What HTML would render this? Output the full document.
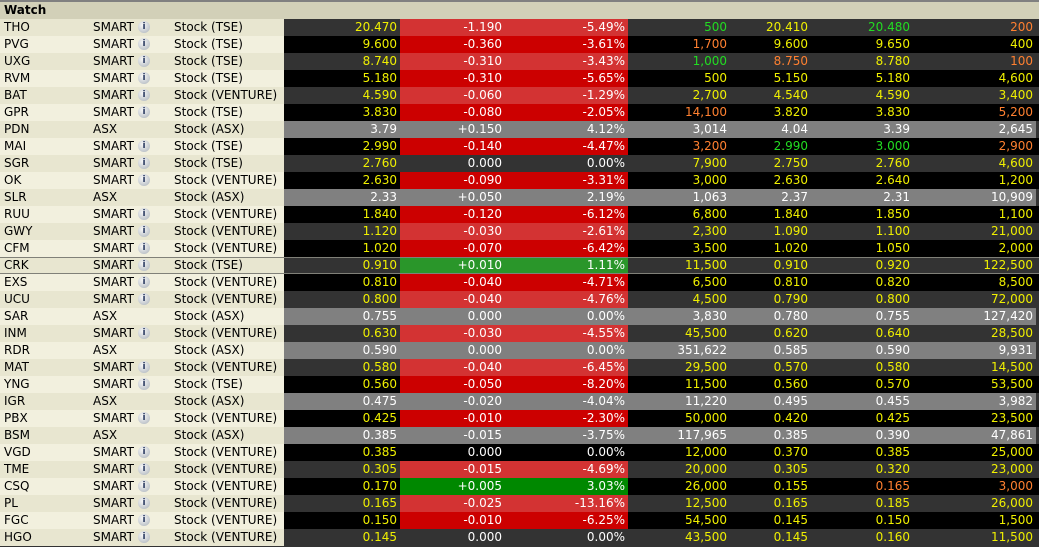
<!DOCTYPE html>
<html><head><meta charset="utf-8"><style>
body{margin:0;width:1039px;height:547px;overflow:hidden;background:#333;font-family:"DejaVu Sans","Liberation Sans",sans-serif;font-size:12px}
.top{height:2px;background:#808080}
.hd{height:17px;background:#d2d0b8;font-weight:bold;line-height:17px;padding-left:4px;color:#000}
table{border-collapse:collapse;table-layout:fixed;width:1039px}
td{height:17px;padding:0;white-space:nowrap;overflow:hidden;line-height:17px}
td.s{padding-left:4px;color:#000}
td.x{padding-left:3px;color:#000}
td.t{color:#000}
td.n{text-align:right;padding-right:3px;color:#f0f000}
td.c{text-align:right;padding-right:10px;color:#fff}
td.p{text-align:right;padding-right:3px;color:#fff}
td.z{padding:0}
tr.e td.s,tr.e td.x,tr.e td.i,tr.e td.t{background:#e8e6d0}
tr.o td.s,tr.o td.x,tr.o td.i,tr.o td.t{background:#f2f0de}
tr.e td.n,tr.e td.c,tr.e td.p,tr.e td.z{background:#333}
tr.o td.n,tr.o td.c,tr.o td.p,tr.o td.z{background:#000}
tr.e td.r{background:#d33333}
tr.o td.r{background:#cc0000}
tr.e td.gg{background:#2a962a}
tr.o td.gg{background:#008800}
tr.a td.n,tr.a td.c,tr.a td.p{background:#808080;color:#fff}
tr.a td.z{background:#333}
.g{color:#22dd22!important}.or{color:#ff8030!important}
td.i{position:relative}
.ic{position:absolute;left:0;top:2px;width:12px;height:12px;border-radius:50%;background:radial-gradient(circle at 40% 35%,#fafafa,#a8b0b8);font-size:9px;font-weight:bold;line-height:12px;text-align:center;color:#2a3a60}
tr.sel td{box-shadow:inset 0 1px #808078,inset 0 -1px #808078}
</style></head><body>
<div class="top"></div>
<div class="hd">Watch</div>
<table>
<colgroup><col style="width:90px"><col style="width:48px"><col style="width:36px"><col style="width:110px"><col style="width:116px"><col style="width:112px"><col style="width:116px"><col style="width:102px"><col style="width:81px"><col style="width:102px"><col style="width:123px"><col style="width:3px"></colgroup>
<tr class="e"><td class="s">THO</td><td class="x">SMART</td><td class="i"><span class="ic">i</span></td><td class="t">Stock (TSE)</td><td class="n">20.470</td><td class="c r">-1.190</td><td class="p r">-5.49%</td><td class="n g">500</td><td class="n">20.410</td><td class="n g">20.480</td><td class="n or">200</td><td class="z"></td></tr>
<tr class="o"><td class="s">PVG</td><td class="x">SMART</td><td class="i"><span class="ic">i</span></td><td class="t">Stock (TSE)</td><td class="n">9.600</td><td class="c r">-0.360</td><td class="p r">-3.61%</td><td class="n or">1,700</td><td class="n">9.600</td><td class="n">9.650</td><td class="n">400</td><td class="z"></td></tr>
<tr class="e"><td class="s">UXG</td><td class="x">SMART</td><td class="i"><span class="ic">i</span></td><td class="t">Stock (TSE)</td><td class="n">8.740</td><td class="c r">-0.310</td><td class="p r">-3.43%</td><td class="n g">1,000</td><td class="n or">8.750</td><td class="n">8.780</td><td class="n or">100</td><td class="z"></td></tr>
<tr class="o"><td class="s">RVM</td><td class="x">SMART</td><td class="i"><span class="ic">i</span></td><td class="t">Stock (TSE)</td><td class="n">5.180</td><td class="c r">-0.310</td><td class="p r">-5.65%</td><td class="n">500</td><td class="n">5.150</td><td class="n">5.180</td><td class="n">4,600</td><td class="z"></td></tr>
<tr class="e"><td class="s">BAT</td><td class="x">SMART</td><td class="i"><span class="ic">i</span></td><td class="t">Stock (VENTURE)</td><td class="n">4.590</td><td class="c r">-0.060</td><td class="p r">-1.29%</td><td class="n">2,700</td><td class="n">4.540</td><td class="n">4.590</td><td class="n">3,400</td><td class="z"></td></tr>
<tr class="o"><td class="s">GPR</td><td class="x">SMART</td><td class="i"><span class="ic">i</span></td><td class="t">Stock (TSE)</td><td class="n">3.830</td><td class="c r">-0.080</td><td class="p r">-2.05%</td><td class="n or">14,100</td><td class="n">3.820</td><td class="n">3.830</td><td class="n or">5,200</td><td class="z"></td></tr>
<tr class="e a"><td class="s">PDN</td><td class="x">ASX</td><td class="i"></td><td class="t">Stock (ASX)</td><td class="n">3.79</td><td class="c">+0.150</td><td class="p">4.12%</td><td class="n">3,014</td><td class="n">4.04</td><td class="n">3.39</td><td class="n">2,645</td><td class="z"></td></tr>
<tr class="o"><td class="s">MAI</td><td class="x">SMART</td><td class="i"><span class="ic">i</span></td><td class="t">Stock (TSE)</td><td class="n">2.990</td><td class="c r">-0.140</td><td class="p r">-4.47%</td><td class="n or">3,200</td><td class="n g">2.990</td><td class="n g">3.000</td><td class="n or">2,900</td><td class="z"></td></tr>
<tr class="e"><td class="s">SGR</td><td class="x">SMART</td><td class="i"><span class="ic">i</span></td><td class="t">Stock (TSE)</td><td class="n">2.760</td><td class="c">0.000</td><td class="p">0.00%</td><td class="n">7,900</td><td class="n">2.750</td><td class="n">2.760</td><td class="n">4,600</td><td class="z"></td></tr>
<tr class="o"><td class="s">OK</td><td class="x">SMART</td><td class="i"><span class="ic">i</span></td><td class="t">Stock (VENTURE)</td><td class="n">2.630</td><td class="c r">-0.090</td><td class="p r">-3.31%</td><td class="n">3,000</td><td class="n">2.630</td><td class="n">2.640</td><td class="n">1,200</td><td class="z"></td></tr>
<tr class="e a"><td class="s">SLR</td><td class="x">ASX</td><td class="i"></td><td class="t">Stock (ASX)</td><td class="n">2.33</td><td class="c">+0.050</td><td class="p">2.19%</td><td class="n">1,063</td><td class="n">2.37</td><td class="n">2.31</td><td class="n">10,909</td><td class="z"></td></tr>
<tr class="o"><td class="s">RUU</td><td class="x">SMART</td><td class="i"><span class="ic">i</span></td><td class="t">Stock (VENTURE)</td><td class="n">1.840</td><td class="c r">-0.120</td><td class="p r">-6.12%</td><td class="n">6,800</td><td class="n">1.840</td><td class="n">1.850</td><td class="n">1,100</td><td class="z"></td></tr>
<tr class="e"><td class="s">GWY</td><td class="x">SMART</td><td class="i"><span class="ic">i</span></td><td class="t">Stock (VENTURE)</td><td class="n">1.120</td><td class="c r">-0.030</td><td class="p r">-2.61%</td><td class="n">2,300</td><td class="n">1.090</td><td class="n">1.100</td><td class="n">21,000</td><td class="z"></td></tr>
<tr class="o"><td class="s">CFM</td><td class="x">SMART</td><td class="i"><span class="ic">i</span></td><td class="t">Stock (VENTURE)</td><td class="n">1.020</td><td class="c r">-0.070</td><td class="p r">-6.42%</td><td class="n">3,500</td><td class="n">1.020</td><td class="n">1.050</td><td class="n">2,000</td><td class="z"></td></tr>
<tr class="e sel"><td class="s">CRK</td><td class="x">SMART</td><td class="i"><span class="ic">i</span></td><td class="t">Stock (TSE)</td><td class="n">0.910</td><td class="c gg">+0.010</td><td class="p gg">1.11%</td><td class="n">11,500</td><td class="n">0.910</td><td class="n">0.920</td><td class="n">122,500</td><td class="z"></td></tr>
<tr class="o"><td class="s">EXS</td><td class="x">SMART</td><td class="i"><span class="ic">i</span></td><td class="t">Stock (VENTURE)</td><td class="n">0.810</td><td class="c r">-0.040</td><td class="p r">-4.71%</td><td class="n">6,500</td><td class="n">0.810</td><td class="n">0.820</td><td class="n">8,500</td><td class="z"></td></tr>
<tr class="e"><td class="s">UCU</td><td class="x">SMART</td><td class="i"><span class="ic">i</span></td><td class="t">Stock (VENTURE)</td><td class="n">0.800</td><td class="c r">-0.040</td><td class="p r">-4.76%</td><td class="n">4,500</td><td class="n">0.790</td><td class="n">0.800</td><td class="n">72,000</td><td class="z"></td></tr>
<tr class="o a"><td class="s">SAR</td><td class="x">ASX</td><td class="i"></td><td class="t">Stock (ASX)</td><td class="n">0.755</td><td class="c">0.000</td><td class="p">0.00%</td><td class="n">3,830</td><td class="n">0.780</td><td class="n">0.755</td><td class="n">127,420</td><td class="z"></td></tr>
<tr class="e"><td class="s">INM</td><td class="x">SMART</td><td class="i"><span class="ic">i</span></td><td class="t">Stock (VENTURE)</td><td class="n">0.630</td><td class="c r">-0.030</td><td class="p r">-4.55%</td><td class="n">45,500</td><td class="n">0.620</td><td class="n">0.640</td><td class="n">28,500</td><td class="z"></td></tr>
<tr class="o a"><td class="s">RDR</td><td class="x">ASX</td><td class="i"></td><td class="t">Stock (ASX)</td><td class="n">0.590</td><td class="c">0.000</td><td class="p">0.00%</td><td class="n">351,622</td><td class="n">0.585</td><td class="n">0.590</td><td class="n">9,931</td><td class="z"></td></tr>
<tr class="e"><td class="s">MAT</td><td class="x">SMART</td><td class="i"><span class="ic">i</span></td><td class="t">Stock (VENTURE)</td><td class="n">0.580</td><td class="c r">-0.040</td><td class="p r">-6.45%</td><td class="n">29,500</td><td class="n">0.570</td><td class="n">0.580</td><td class="n">14,500</td><td class="z"></td></tr>
<tr class="o"><td class="s">YNG</td><td class="x">SMART</td><td class="i"><span class="ic">i</span></td><td class="t">Stock (TSE)</td><td class="n">0.560</td><td class="c r">-0.050</td><td class="p r">-8.20%</td><td class="n">11,500</td><td class="n">0.560</td><td class="n">0.570</td><td class="n">53,500</td><td class="z"></td></tr>
<tr class="e a"><td class="s">IGR</td><td class="x">ASX</td><td class="i"></td><td class="t">Stock (ASX)</td><td class="n">0.475</td><td class="c">-0.020</td><td class="p">-4.04%</td><td class="n">11,220</td><td class="n">0.495</td><td class="n">0.455</td><td class="n">3,982</td><td class="z"></td></tr>
<tr class="o"><td class="s">PBX</td><td class="x">SMART</td><td class="i"><span class="ic">i</span></td><td class="t">Stock (VENTURE)</td><td class="n">0.425</td><td class="c r">-0.010</td><td class="p r">-2.30%</td><td class="n">50,000</td><td class="n">0.420</td><td class="n">0.425</td><td class="n">23,500</td><td class="z"></td></tr>
<tr class="e a"><td class="s">BSM</td><td class="x">ASX</td><td class="i"></td><td class="t">Stock (ASX)</td><td class="n">0.385</td><td class="c">-0.015</td><td class="p">-3.75%</td><td class="n">117,965</td><td class="n">0.385</td><td class="n">0.390</td><td class="n">47,861</td><td class="z"></td></tr>
<tr class="o"><td class="s">VGD</td><td class="x">SMART</td><td class="i"><span class="ic">i</span></td><td class="t">Stock (VENTURE)</td><td class="n">0.385</td><td class="c">0.000</td><td class="p">0.00%</td><td class="n">12,000</td><td class="n">0.370</td><td class="n">0.385</td><td class="n">25,000</td><td class="z"></td></tr>
<tr class="e"><td class="s">TME</td><td class="x">SMART</td><td class="i"><span class="ic">i</span></td><td class="t">Stock (VENTURE)</td><td class="n">0.305</td><td class="c r">-0.015</td><td class="p r">-4.69%</td><td class="n">20,000</td><td class="n">0.305</td><td class="n">0.320</td><td class="n">23,000</td><td class="z"></td></tr>
<tr class="o"><td class="s">CSQ</td><td class="x">SMART</td><td class="i"><span class="ic">i</span></td><td class="t">Stock (VENTURE)</td><td class="n">0.170</td><td class="c gg">+0.005</td><td class="p gg">3.03%</td><td class="n">26,000</td><td class="n">0.155</td><td class="n or">0.165</td><td class="n or">3,000</td><td class="z"></td></tr>
<tr class="e"><td class="s">PL</td><td class="x">SMART</td><td class="i"><span class="ic">i</span></td><td class="t">Stock (VENTURE)</td><td class="n">0.165</td><td class="c r">-0.025</td><td class="p r">-13.16%</td><td class="n">12,500</td><td class="n">0.165</td><td class="n">0.185</td><td class="n">26,000</td><td class="z"></td></tr>
<tr class="o"><td class="s">FGC</td><td class="x">SMART</td><td class="i"><span class="ic">i</span></td><td class="t">Stock (VENTURE)</td><td class="n">0.150</td><td class="c r">-0.010</td><td class="p r">-6.25%</td><td class="n">54,500</td><td class="n">0.145</td><td class="n">0.150</td><td class="n">1,500</td><td class="z"></td></tr>
<tr class="e"><td class="s">HGO</td><td class="x">SMART</td><td class="i"><span class="ic">i</span></td><td class="t">Stock (VENTURE)</td><td class="n">0.145</td><td class="c">0.000</td><td class="p">0.00%</td><td class="n">43,500</td><td class="n">0.145</td><td class="n">0.160</td><td class="n">11,500</td><td class="z"></td></tr>
</table>
</body></html>
